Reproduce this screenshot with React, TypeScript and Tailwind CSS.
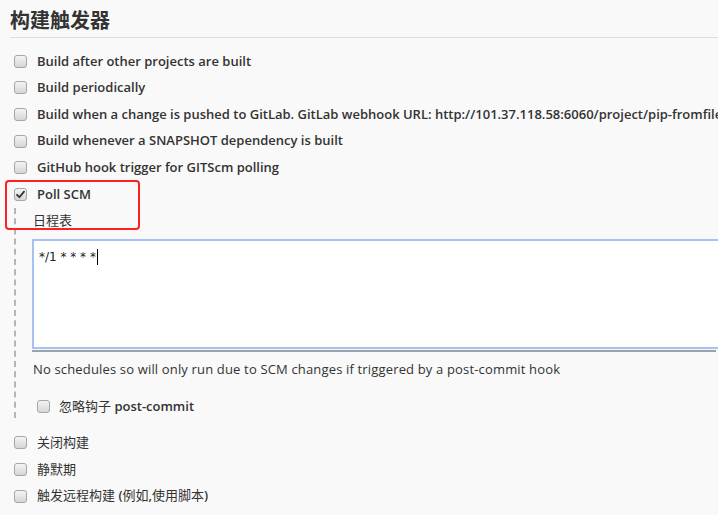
import React from "react";

const Box = ({ checked = false }: { checked?: boolean }) => (
  <span className="relative inline-block w-[13px] h-[13px] shrink-0 rounded-[3px] border border-[#a6a6a6] bg-gradient-to-b from-[#f4f4f4] to-[#d6d6d6]">
    {checked && (
      <svg viewBox="0 0 13 13" className="absolute left-[-1px] top-[-1px] w-[13px] h-[13px]">
        <path d="M3 6.8 L5.4 9.2 L10 3.6" fill="none" stroke="#333" strokeWidth="1.8" strokeLinecap="round" strokeLinejoin="round" />
      </svg>
    )}
  </span>
);

const Row = ({ children, checked = false }: { children: React.ReactNode; checked?: boolean }) => (
  <div className="flex items-center h-[26.6px] whitespace-nowrap">
    <Box checked={checked} />
    <span className="ml-[10px] font-semibold">{children}</span>
  </div>
);

const Cjk = ({ children }: { children: React.ReactNode }) => <span className="font-normal">{children}</span>;

export default function App() {
  return (
    <div
      className="relative w-[718px] h-[515px] overflow-hidden bg-[#f9f9f9] text-[13px] text-[#333]"
      style={{ fontFamily: "'Open Sans', 'Noto Sans CJK SC', sans-serif" }}
    >
      <div className="ml-[10px] pt-[8px] pb-[3px] border-b border-[#dcdcdc]">
        <h1 className="text-[20px] leading-[26px] font-bold text-[#333]">构建触发器</h1>
      </div>

      <div className="pl-[14px] pt-[10px]">
        <Row>Build after other projects are built</Row>
        <Row>Build periodically</Row>
        <Row>Build when a change is pushed to GitLab. GitLab webhook URL: http://101.37.118.58:6060/project/pip-fromfile</Row>
        <Row>Build whenever a SNAPSHOT dependency is built</Row>
        <Row>GitHub hook trigger for GITScm polling</Row>
        <Row checked>Poll SCM</Row>

        <div className="border-l-2 border-dashed border-[#b5b5b5] pl-[17px]">
          <div className="h-[27px] flex items-center">日程表</div>
          <div className="mt-[4px] -ml-[1px] w-[700px]">
            <div className="h-[110px] bg-white border-2 border-[#a7c1f2] px-[5px] pt-[6px]">
              <span className="text-[12px] leading-[16px] text-[#222]" style={{ fontFamily: "'DejaVu Sans', sans-serif" }}>
                */1 * * * *
              </span>
              <span className="inline-block align-middle ml-[1px] w-px h-[16px] bg-black" />
            </div>
            <div className="mt-[1px] h-[2px] w-[684px] bg-[#9aa3ad]" />
          </div>
          <div className="mt-[7px] leading-[20px] whitespace-nowrap tracking-[0.16px]">
            No schedules so will only run due to SCM changes if triggered by a post-commit hook
          </div>
          <div className="mt-[17px] h-[22px] flex items-center pl-[4px] whitespace-nowrap">
            <Box />
            <span className="ml-[9px]">
              忽略钩子 <span className="font-semibold">post-commit</span>
            </span>
          </div>
        </div>

        <div className="mt-[12px]">
          <Row>
            <Cjk>关闭构建</Cjk>
          </Row>
          <Row>
            <Cjk>静默期</Cjk>
          </Row>
          <Row>
            <Cjk>触发远程构建</Cjk> (<Cjk>例如</Cjk>,<Cjk>使用脚本</Cjk>)
          </Row>
        </div>
      </div>

      <div className="absolute left-[5px] top-[180px] w-[135px] h-[50px] border-2 border-[#ff1f1f] rounded-[4px]" />
    </div>
  );
}
